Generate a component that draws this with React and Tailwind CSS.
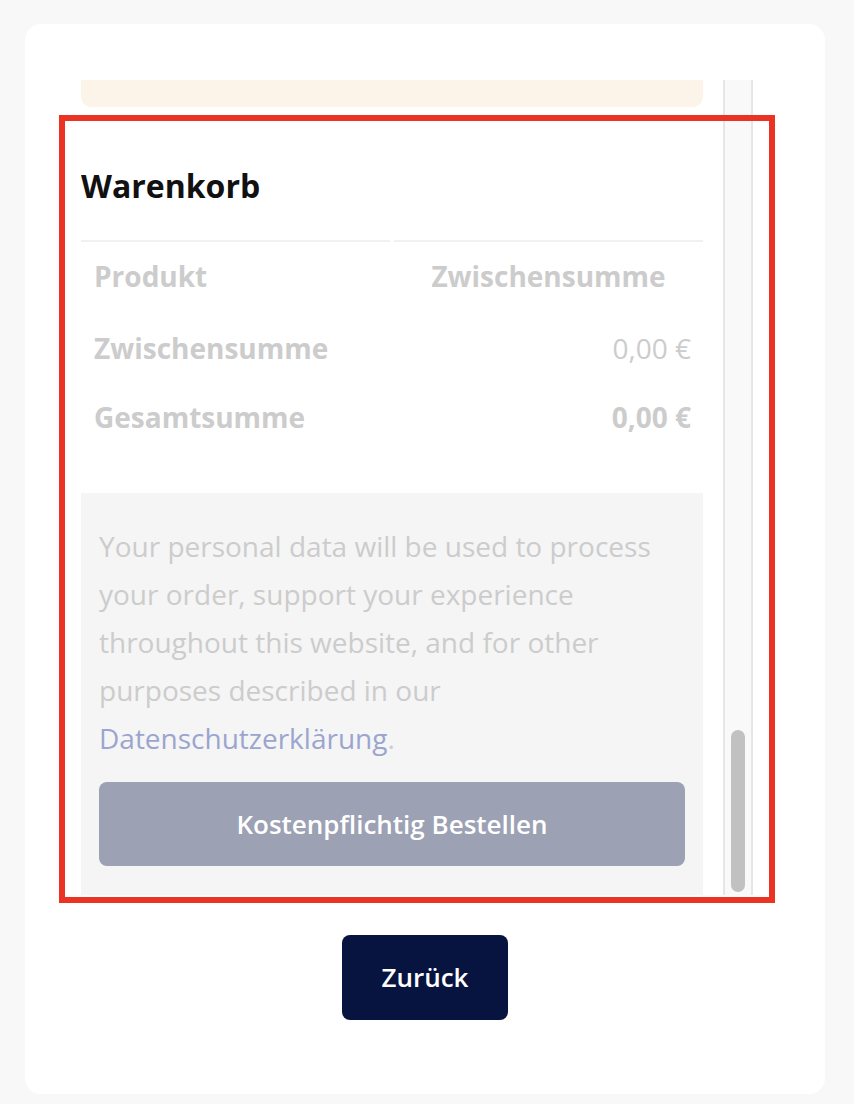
export default function App() {
  return (
    <div className="min-h-screen bg-[#f8f8f8] pt-[24px] pb-[10px] pl-[25px] pr-[29px] font-['Open_Sans',sans-serif]">
      <div className="relative h-[1070px] rounded-[16px] bg-white pt-[56px]">
        <div className="ml-[56px] flex h-[815px] overflow-hidden">
          <div className="w-[622px] shrink-0">
            <div className="h-[27px] rounded-b-[10px] bg-[#fcf4e8]" />

            <h2 className="mt-[59px] text-[32px] leading-[40px] font-bold text-[#111111]">Warenkorb</h2>

            <div className="mt-[34px] grid grid-cols-2 gap-x-[4px]">
              <div className="border-t-2 border-[#f1f1f1]" />
              <div className="border-t-2 border-[#f1f1f1]" />
            </div>

            <div className="grid grid-cols-[309px_1fr] gap-x-[4px] text-[28px] leading-[38px] text-[#cccccc]">
              <div className="pl-[13px] pt-[15px] font-bold">Produkt</div>
              <div className="pt-[15px] text-center font-bold">Zwischensumme</div>

              <div className="pl-[13px] pt-[34px] font-bold">Zwischensumme</div>
              <div className="pt-[34px] pr-[12px] text-right">0,00 €</div>

              <div className="pl-[13px] pt-[31px] font-bold">Gesamtsumme</div>
              <div className="pt-[31px] pr-[12px] text-right font-bold">0,00 €</div>
            </div>

            <div className="mt-[57px] bg-[#f5f5f5] px-[18px] pt-[29px] pb-[40px]">
              <p className="text-[28px] leading-[48px] text-[#cccccc]">
                Your personal data will be used to process your order, support your experience throughout this website, and for other purposes described in our{" "}
                <a href="#" className="text-[#9ba5cf]">Datenschutzerklärung</a>.
              </p>
              <button className="mt-[20px] flex h-[84px] w-full items-center justify-center rounded-[8px] bg-[#9ca1b4] text-[26px] font-semibold text-white">
                Kostenpflichtig Bestellen
              </button>
            </div>
          </div>

          <div className="ml-[20px] flex w-[30px] shrink-0 flex-col justify-end border-x-2 border-[#e6e6e6] bg-[#f9f9f9] px-[6px] pb-[3px]">
            <div className="h-[162px] rounded-full bg-[#c1c1c1]" />
          </div>
        </div>

        <div className="mt-[40px] flex justify-center">
          <button className="flex h-[85px] w-[166px] items-center justify-center rounded-[8px] bg-[#081440] text-[26px] font-semibold text-white">
            Zurück
          </button>
        </div>

        <div className="pointer-events-none absolute left-[34px] top-[91px] h-[788px] w-[716px] border-[6px] border-[#eb3324]" />
      </div>
    </div>
  );
}
